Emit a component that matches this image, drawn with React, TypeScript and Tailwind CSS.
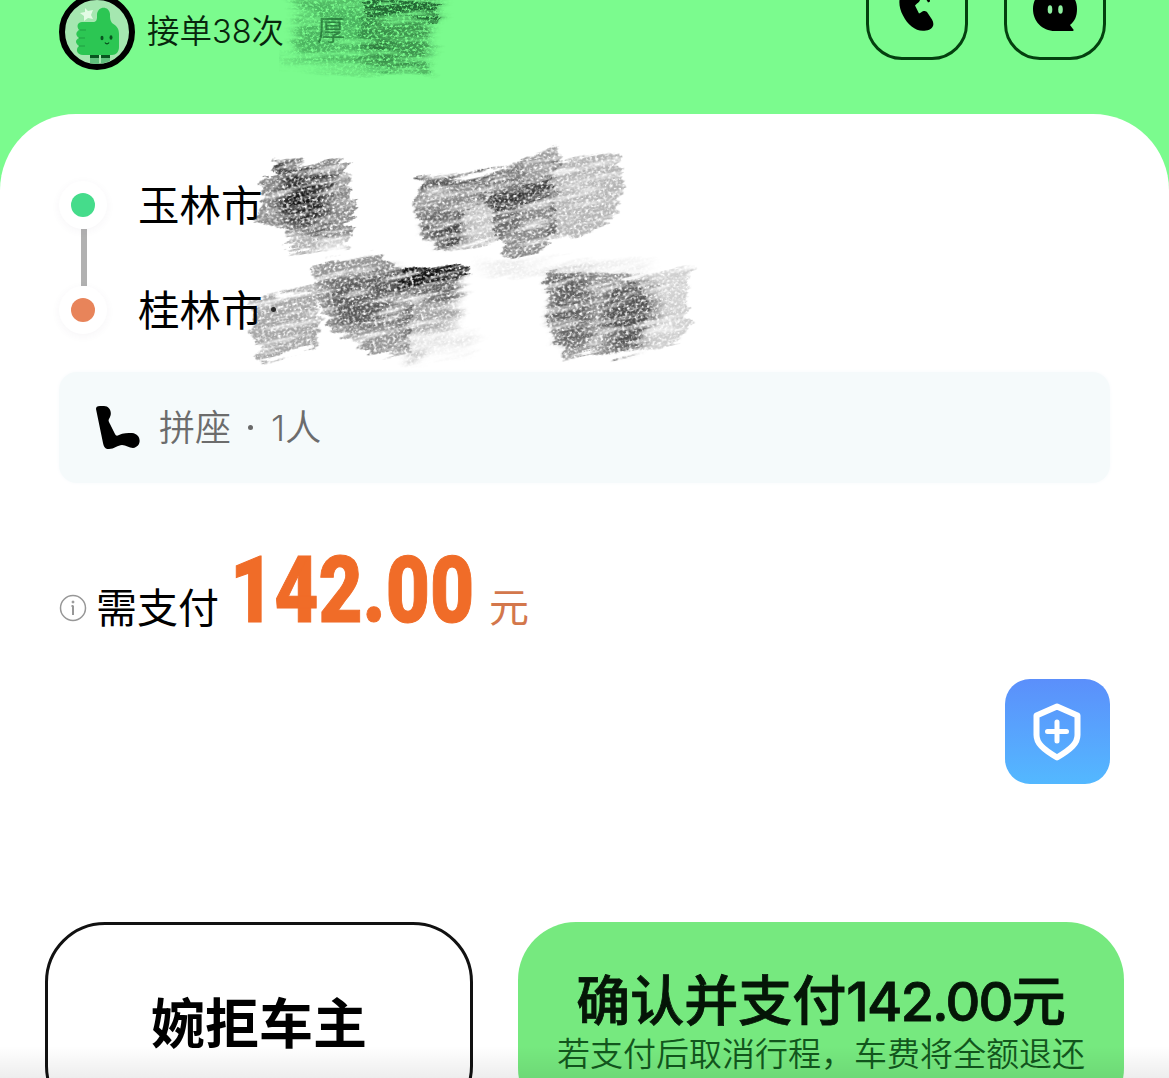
import React from 'react';

interface Patch {
    points: string;
    opacity: number;
    tone?: string;
    soft?: boolean;
}

const HEADER_PATCHES: Patch[] = [
    { points: '16,0 80,0 90,30 84,64 18,60 14,30', opacity: 0.36, tone: '#17602a', soft: true },
    { points: '0,60 40,66 150,70 148,75 60,73 0,64', opacity: 0.3, tone: '#17602a', soft: true },
    { points: '84,0 170,0 152,34 148,72 120,74 84,66', opacity: 0.34, tone: '#0c3f1a', soft: true },
    { points: '86,6 166,5 160,14 158,28 138,24 86,18', opacity: 0.5, tone: '#0c3f1a' },
    { points: '80,20 140,18 150,36 146,60 150,72 120,75 80,66', opacity: 0.16, tone: '#0c3f1a' },
    { points: '92,44 110,40 114,56 94,60', opacity: 0.3, tone: '#0c3f1a', soft: true },
];

const ROUTE_PATCHES: Patch[] = [
    // start point
    { points: '31,20 107,21 106,32 113,35 109,42 110,54 117,62 113,74 109,94 46,94 44,86 14,79 24,66 20,48 22,34 32,36', opacity: 0.4 },
    { points: '46,94 109,92 107,106 46,108 52,98', opacity: 0.26 },
    { points: '31,20 98,35 96,42 34,33', opacity: 0.45 },
    { points: '46,34 90,38 94,54 84,62 90,82 66,84 40,72 38,52', opacity: 0.55, soft: true },
    { points: '48,44 78,48 80,66 60,78 46,66', opacity: 0.6, soft: true },
    { points: '178,40 250,30 246,60 222,70 220,98 204,106 184,100 184,86 174,72 176,56', opacity: 0.4 },
    { points: '244,31 284,20 282,88 244,101 204,108 218,70 240,60', opacity: 0.2 },
    { points: '178,38 246,29 246,37 180,48', opacity: 0.3 },
    { points: '184,78 218,72 230,98 200,102 186,90', opacity: 0.35, soft: true },
    { points: '250,30 316,4 322,10 314,40 252,60', opacity: 0.33 },
    { points: '248,60 314,40 316,70 314,90 300,108 268,117 264,104 252,88', opacity: 0.4 },
    { points: '250,57 312,34 314,47 252,72', opacity: 0.5 },
    { points: '314,20 378,10 378,22 384,40 380,62 382,72 320,96 304,98 314,60', opacity: 0.25 },
    // destination
    { points: '10,160 72,144 78,164 80,182 78,204 54,210 22,223 18,206 8,190', opacity: 0.3 },
    { points: '72,124 132,111 146,122 166,132 170,160 168,194 170,208 130,214 122,206 92,190 84,170 74,152', opacity: 0.36 },
    { points: '92,138 160,128 174,144 160,172 110,190 90,166', opacity: 0.35, soft: true },
    { points: '159,127 229,125 230,131 214,140 160,142', opacity: 0.75 },
    { points: '159,126 226,126 212,138 162,141', opacity: 0.6 },
    { points: '160,140 224,134 214,158 164,160', opacity: 0.5, soft: true },
    { points: '160,156 216,156 218,176 204,188 162,196', opacity: 0.3, soft: true },
    { points: '150,196 240,190 230,206 160,214', opacity: 0.08, soft: true },
    { points: '230,122 420,120 400,130 260,132', opacity: 0.08, soft: true },
    { points: '308,128 374,132 396,138 408,160 404,196 374,216 348,210 324,217 326,206 312,196 308,180 306,160', opacity: 0.34 },
    { points: '370,142 452,124 446,160 450,184 440,196 374,216', opacity: 0.17 },
    { points: '312,132 350,130 350,196 324,206 310,180', opacity: 0.34, soft: true },
    { points: '364,144 414,140 418,180 396,206 362,208', opacity: 0.32, soft: true },
    { points: '164,210 186,206 178,220 170,222', opacity: 0.2, soft: true },
];

const Scribble = ({ id, patches, width, height, angle, className }: {
    id: string;
    patches: Patch[];
    width: number;
    height: number;
    angle: number;
    className: string;
}) => (
    <svg width={width} height={height} viewBox={`0 0 ${width} ${height}`} className={className} aria-hidden="true">
        <defs>
            <filter id={`${id}-grain`} x="-5%" y="-10%" width="110%" height="120%" colorInterpolationFilters="sRGB">
                <feTurbulence type="fractalNoise" baseFrequency="0.02 0.15" numOctaves="3" seed="4" result="streak" />
                <feDisplacementMap in="SourceGraphic" in2="streak" scale="20" xChannelSelector="R" yChannelSelector="G" result="rough" />
                <feTurbulence type="fractalNoise" baseFrequency="0.34 0.42" numOctaves="3" seed="9" />
                <feColorMatrix values="0 0 0 0 0  0 0 0 0 0  0 0 0 0 0  3.4 0 0 0 -0.85" />
                <feGaussianBlur stdDeviation="0.55" result="grain" />
                <feComposite in="rough" in2="grain" operator="in" result="grained" />
                <feColorMatrix in="streak" values="0 0 0 0 0  0 0 0 0 0  0 0 0 0 0  0 0 2.4 0 -0.25" result="lines" />
                <feComposite in="grained" in2="lines" operator="in" />
            </filter>
            <filter id={`${id}-soft`} x="-20%" y="-30%" width="140%" height="160%">
                <feGaussianBlur stdDeviation="5" />
            </filter>
        </defs>
        <g filter={`url(#${id}-grain)`} transform={`rotate(${angle})`}>
            <g transform={`rotate(${-angle})`}>
                {patches.map((p, i) => (
                    <polygon
                        key={i}
                        points={p.points}
                        fill={p.tone ?? '#111'}
                        opacity={Math.min(1, p.opacity * 1.25)}
                        filter={p.soft ? `url(#${id}-soft)` : undefined}
                    />
                ))}
            </g>
        </g>
    </svg>
);

const Avatar = () => (
    <div className="-mt-[6px] h-[76px] w-[76px] shrink-0 overflow-hidden rounded-full border-[6px] border-black bg-[#a5e7b0]">
        <svg viewBox="0 0 64 64" className="h-full w-full">
            <path d="M25 55h9v10h-9zM36 55h9v10h-9z" fill="#5fbf7c" />
            <path d="M25 53h9v5h-9zM36 53h9v5h-9z" fill="#08551f" />
            <path
                d="M17 22h11c3 0 4-2 4-5v-2c0-9 12-10 13-1 0 4 0 6 2 9 5 3 7 6 7 11v13c0 5-3 8-7 8H18c-6 0-8-6-4-9-4-3-4-6 0-8-4-3-3-6 0-8-3-4-1-8 3-8z"
                fill="#2cc653"
            />
            <path d="M15 30h6M14 38h6M14 46h6" stroke="#1f9e42" strokeWidth="1.2" />
            <path d="m20 8 3 3 5-1-2 5 2 4-5-1-4 3v-5l-4-3 5-1z" fill="#e3fbe5" />
            <ellipse cx="37" cy="38" rx="1.500" ry="2.200" fill="#08551f" />
            <ellipse cx="46" cy="37.500" rx="1.500" ry="2.200" fill="#08551f" />
            <path d="M40 42.500c1 1.600 3 1.600 4 0" stroke="#08551f" strokeWidth="1.400" fill="none" />
        </svg>
    </div>
);

const PhoneIcon = () => (
    <svg width="36" height="43" viewBox="0 0 36 42" fill="currentColor" className="mt-[3px]">
        <path d="M5 0C-1 7-1 17 4 26c5 10 14 17 23 15 7-1 9-6 6-11l-4-6c-2-3-4-3-7-1l-2 1-4-8 2-2c3-2 4-4 2-7L16 2c-2-4-7-5-11-2z" />
        <path d="M21 8c4 0 7 2 8 5l2-1c0-4-3-7-7-8z" />
    </svg>
);

const ChatIcon = () => (
    <svg width="46" height="46" viewBox="0 0 46 46">
        <path d="M23 2C10 2 1 11 1 23s9 22 22 22h17c2 0 2-1 1-2l-3-4c5-4 7-9 7-16C45 11 36 2 23 2z" />
        <ellipse cx="18" cy="23.500" rx="2.300" ry="4.300" fill="#8ff0a0" />
        <ellipse cx="28.500" cy="23.500" rx="2.300" ry="4.300" fill="#8ff0a0" />
    </svg>
);

const SeatIcon = () => (
    <svg width="46" height="45" viewBox="0 0 46 45">
        <path d="M1 4c0-2 1-3 4-3h4c6 0 9 7 5 13-1 2 0 3 1 5l5 10c1 2 2 2 4 1 4-2 9-2 13-2 10 1 10 14 1 15-4 0-7-3-11-3s-8 4-13 4c-4 0-5-2-6-6L1 4z" />
    </svg>
);

const RoutePoint = ({ color, name }: { color: string; name: string }) => (
    <div className="flex h-12 items-center">
        <span className="flex h-12 w-12 items-center justify-center rounded-full bg-white shadow-[0_2px_8px_rgba(80,50,90,0.05)]">
            <span className={`h-6 w-6 rounded-full ${color}`} />
        </span>
        <span className="ml-[31px] pt-[4px] text-[41.500px] leading-none">{name}</span>
    </div>
);

export default function App() {
    return (
        <div className="relative flex h-[1078px] w-[1169px] flex-col overflow-hidden bg-[#7bfb8e] font-['Inter','Noto_Sans_CJK_SC',sans-serif] text-black">
            {/* Driver */}
            <header className="relative flex h-[114px] shrink-0 items-start pl-[59px] pr-[63px]">
                <Avatar />
                <span className="ml-3 mt-[12px] text-[32.500px] font-[350] leading-10 text-[#08260d]">接单38次</span>
                <span className="ml-[33px] mt-[15px] text-[28px] leading-8 text-[#175c28] opacity-60">厚</span>
                <Scribble id="head" patches={HEADER_PATCHES} width={190} height={84} angle={0} className="absolute left-[279px] top-[-3px]" />
                <div className="ml-auto flex gap-[36px]">
                    <button className="-mt-[42px] flex h-[102px] w-[102px] items-center justify-center rounded-[36px] border-[3px] border-[#04400f]">
                        <PhoneIcon />
                    </button>
                    <button className="-mt-[42px] flex h-[102px] w-[102px] items-center justify-center rounded-[36px] border-[3px] border-[#04400f]">
                        <ChatIcon />
                    </button>
                </div>
            </header>

            <main className="flex flex-1 flex-col rounded-t-[76px] bg-white px-[59px] pt-[67px]">
                {/* Route */}
                <section className="relative h-[191px] shrink-0">
                    <RoutePoint color="bg-[#45dc8b]" name="玉林市" />
                    <div className="ml-[21.500px] h-[57px] w-[6px] bg-[#b1b1b1]" />
                    <RoutePoint color="bg-[#e8845a]" name="桂林市" />
                    <span className="absolute left-[212px] top-[126px] h-[5px] w-[5px] rounded-full bg-[#333]" />
                    <Scribble id="route" patches={ROUTE_PATCHES} width={470} height={235} angle={-12} className="absolute left-[181px] top-[-39px]" />
                </section>

                {/* Ride type */}
                <section className="flex h-[111px] w-[1051px] shrink-0 items-center rounded-[18px] bg-[#f5fafb] pl-9 shadow-[0_0_4px_#f8fafc]">
                    <SeatIcon />
                    <span className="ml-[18px] text-[36px] font-[350] leading-none text-[#6c6c6c]">拼座</span>
                    <span className="ml-[17px] h-[5px] w-[5px] rounded-full bg-[#686868]" />
                    <span className="ml-[18px] text-[36px] font-[350] leading-none text-[#6c6c6c]">1人</span>
                </section>

                {/* Price */}
                <section className="mt-[56px] flex h-[100px] shrink-0 items-start">
                    <svg width="28" height="28" viewBox="0 0 28 28" className="mt-[55px] shrink-0" fill="none" stroke="#979797">
                        <circle cx="14" cy="14" r="12.500" strokeWidth="1.500" />
                        <path d="M14 11.500V21M12.500 12H14" strokeWidth="2" />
                        <circle cx="14" cy="8" r="1" fill="#979797" />
                    </svg>
                    <span className="ml-[9px] mt-[47px] text-[41px] leading-[44px]">需支付</span>
                    <span className="ml-[11px] mt-[2px] w-[247px] whitespace-nowrap">
                        <span className="inline-block origin-left scale-x-[0.82] font-['Roboto'] text-[93px] font-black leading-[100px] text-[#f06c28] [-webkit-text-stroke:1px_#f06c28]">142.00</span>
                    </span>
                    <span className="ml-[12px] mt-[47px] text-[40px] leading-[44px] text-[#d3774c]">元</span>
                </section>

                {/* Safety */}
                <div className="mt-[40px] flex w-[1050.500px] shrink-0 justify-end">
                    <button className="flex h-[105px] w-[105px] items-center justify-center rounded-[25px] bg-gradient-to-b from-[#5b8ffb] to-[#53b8ff]">
                        <svg width="50" height="60" viewBox="0 0 50 60" fill="none" stroke="white" strokeLinejoin="round" strokeLinecap="round">
                            <path d="M25 4.500 45.500 13.500V33c0 8-6 14-20.500 22.500C10.500 47 4.500 41 4.500 33V13.500z" strokeWidth="6" />
                            <path d="M25 20v19M15.500 29.500h19" strokeWidth="5" />
                        </svg>
                    </button>
                </div>
            </main>

            {/* Actions */}
            <footer className="flex h-[156px] shrink-0 items-start gap-[45px] bg-white pl-[45px]">
                <button className="h-[204px] w-[428px] shrink-0 rounded-[60px] border-[3px] border-[#111] bg-white pt-[2px] text-[54px] font-bold leading-none">
                    婉拒车主
                </button>
                <button className="flex h-[204px] w-[606px] shrink-0 flex-col items-center rounded-[58px] bg-[#76e97f] pt-[51px]">
                    <span className="whitespace-nowrap text-[54px] font-medium leading-[58px] text-[#051507] [-webkit-text-stroke:0.8px_#051507]">
                        确认并支付<span className="tracking-[-1.700px]">142.00</span>元
                    </span>
                    <span className="mt-[4px] whitespace-nowrap text-[33px] font-[350] leading-[38px] text-[#12571d]">若支付后取消行程，车费将全额退还</span>
                </button>
            </footer>
            <div className="pointer-events-none absolute inset-x-0 bottom-0 h-8 bg-gradient-to-b from-transparent to-black/7" />
        </div>
    );
}
